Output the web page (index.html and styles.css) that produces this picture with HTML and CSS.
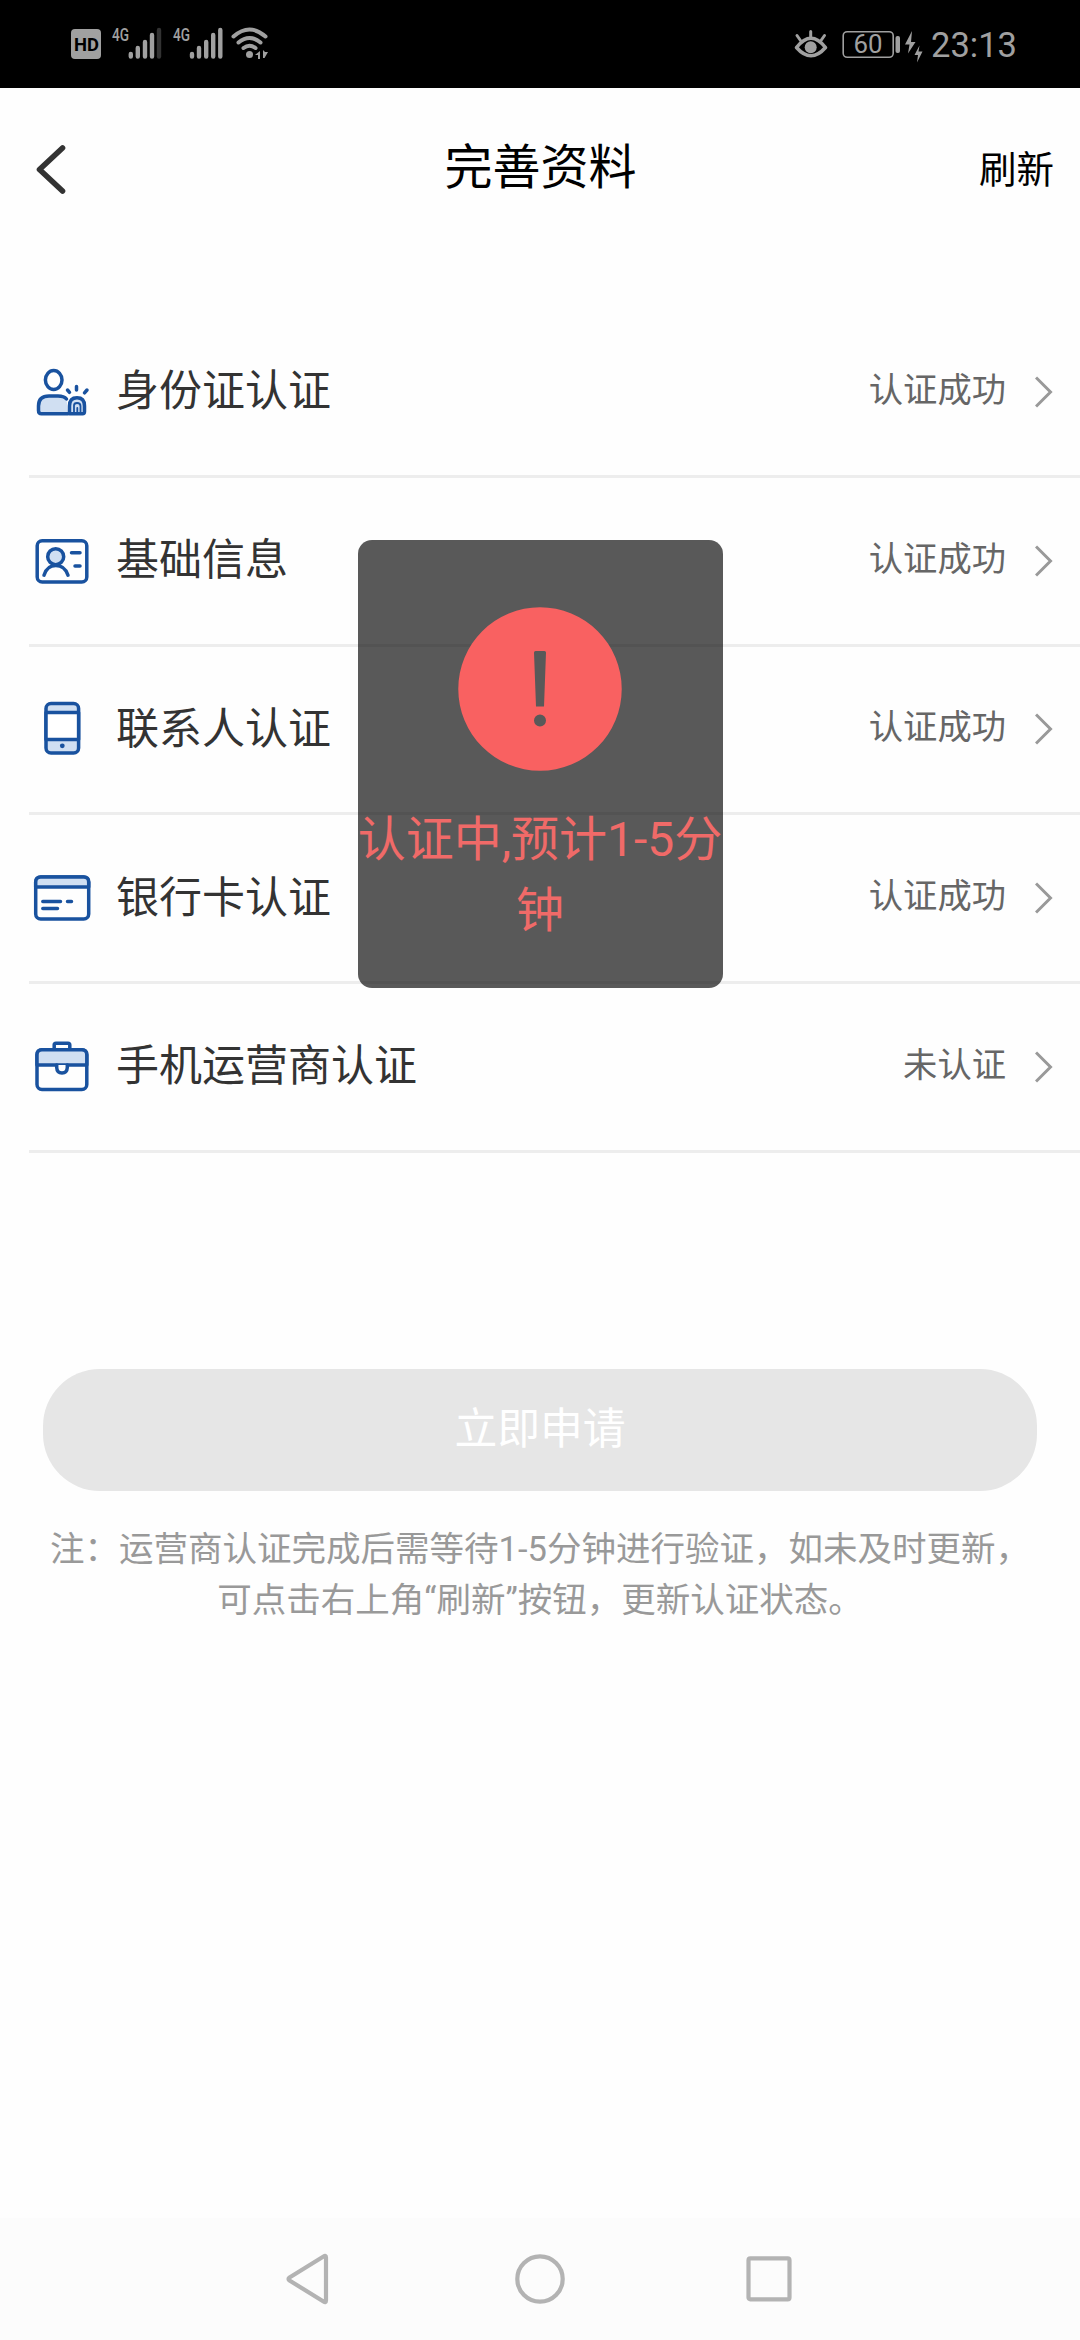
FILE: index.html
```html
<!DOCTYPE html>
<html lang="zh-CN">
<head>
<meta charset="utf-8">
<title>完善资料</title>
<link rel="stylesheet" href="styles.css">
</head>
<body>
<div class="screen">
  <div class="statusbar">
    <svg class="status-left" width="204" height="40" viewBox="0 0 204 40" fill="#a0a0a0">
      <rect x="0" y="6" width="30" height="30" rx="4"/>
      <text x="3" y="27.5" font-size="18" font-weight="700" fill="#000" textLength="25" lengthAdjust="spacingAndGlyphs">HD</text>
      <text x="41" y="18" font-size="18" font-weight="500" textLength="17" lengthAdjust="spacingAndGlyphs">4G</text>
      <g stroke="#a0a0a0" stroke-width="4.4" stroke-linecap="round">
        <path d="M59.8 31v2.5M66.8 25v8.500M74 19v14.500M81 12v21.500"/>
        <path d="M88 7v26.500" stroke="#333"/>
        <path d="M121 31v2.500M128 25v8.500M135.200 19v14.500M142.200 12v21.500M149.300 7v26.500"/>
      </g>
      <text x="102" y="18" font-size="18" font-weight="500" textLength="17" lengthAdjust="spacingAndGlyphs">4G</text>
      <g fill="none" stroke="#a0a0a0" stroke-width="4" stroke-linecap="round">
        <path d="M162.500 13.500Q178.500-.5 194.500 13.500M167.500 19.500Q178.500 10.500 189.500 19.500M172.500 25Q178.500 20.500 184.500 25"/>
      </g>
      <circle cx="178.500" cy="31.500" r="3.500"/>
      <path d="M189 28v8h-2v-4h-3zM192 27v8h1.500l3.500-6h-3z"/>
    </svg>
    <svg class="status-right" width="134" height="40" viewBox="0 0 134 40" fill="#a0a0a0">
      <path d="M2.500 22.500Q17 4 31.500 22.500Q17 39 2.500 22.500z" fill="none" stroke="#a0a0a0" stroke-width="3.600" stroke-linejoin="round"/>
      <circle cx="16.700" cy="22.300" r="6"/>
      <path d="M16.700 12V6.500M6.500 15.500L3 10.500M27 15.500L30.500 10.500" fill="none" stroke="#a0a0a0" stroke-width="3" stroke-linecap="round"/>
      <rect x="49.200" y="6.700" width="50" height="25.600" rx="4" fill="none" stroke="#a0a0a0" stroke-width="1.600"/>
      <rect x="101.500" y="11" width="4.500" height="17" rx="2"/>
      <text x="59.500" y="28" font-size="25.500" textLength="29" lengthAdjust="spacingAndGlyphs">60</text>
      <path d="M118 6l-7 13.500h4.500l-1.500 9L121.500 17h-4.500zM125.500 20.500l-5 9.500h3.500l-1 7.500 5.500-11h-4z"/>
    </svg>
    <span class="clock">23:13</span>
  </div>

  <header class="header">
    <svg class="back" width="30" height="52" viewBox="0 0 30 52"><path d="M26.500 4L3.500 25.500L26.500 47" fill="none" stroke="#333" stroke-width="5.600" stroke-linecap="round" stroke-linejoin="round"/></svg>
    <h1 class="title">完善资料</h1>
    <span class="refresh">刷新</span>
  </header>

  <main class="list">
    <div class="row">
      <svg class="icon" viewBox="0 0 58 58">
        <ellipse cx="20.700" cy="17" rx="8.300" ry="9.500" fill="#fff"/>
        <path class="tint" d="M35 50.800H8.500Q5.500 50.800 5.500 47.500V43Q5.500 33 16 33H25Q31 33 33.500 36"/>
        <path class="tint" d="M36.500 50.800V43Q36.500 34.800 44 34.800Q51.500 34.800 51.500 43V48.500Q51.500 50.800 49.500 50.800z"/>
        <path class="thin" d="M41 50V42.500Q41 40 44 40Q47.500 40 47.500 43V49.500M44.300 45V50"/>
        <path d="M43.500 23.500V27M34.500 27L36.500 29.300M54 27L51.500 29.800"/>
      </svg>
      <span class="name">身份证认证</span><span class="state">认证成功</span>
      <svg class="chevron" viewBox="0 0 18 32"><path d="M1 1.500L15.500 16L1 30.500"/></svg>
    </div>
    <div class="row">
      <svg class="icon" viewBox="0 0 58 58">
        <rect x="4.200" y="8.700" width="49.600" height="41.200" rx="5"/>
        <circle class="tint" cx="22.700" cy="24.700" r="8"/>
        <path d="M11 43.200Q14 33.500 22.800 33.500Q31.800 33.500 35 43.200M38.500 20.800H47M42 34H47"/>
      </svg>
      <span class="name">基础信息</span><span class="state">认证成功</span>
      <svg class="chevron" viewBox="0 0 18 32"><path d="M1 1.500L15.500 16L1 30.500"/></svg>
    </div>
    <div class="row">
      <svg class="icon" viewBox="0 0 58 58">
        <rect class="tint" x="13" y="3.500" width="32.600" height="49.600" rx="5"/>
        <rect x="13" y="12.400" width="32.600" height="27" fill="#fff"/>
        <circle class="dot" cx="29.300" cy="45.800" r="2.400"/>
      </svg>
      <span class="name">联系人认证</span><span class="state">认证成功</span>
      <svg class="chevron" viewBox="0 0 18 32"><path d="M1 1.500L15.500 16L1 30.500"/></svg>
    </div>
    <div class="row">
      <svg class="icon" viewBox="0 0 58 58">
        <rect x="2.700" y="8" width="53" height="42" rx="5"/>
        <path class="tint" d="M2.700 18V13Q2.700 8 7.700 8H50.700Q55.700 8 55.700 13V18z"/>
        <path d="M9.800 32.400H27.500M34.500 32.400H38.500M9.800 39.600H24.500"/>
      </svg>
      <span class="name">银行卡认证</span><span class="state">认证成功</span>
      <svg class="chevron" viewBox="0 0 18 32"><path d="M1 1.500L15.500 16L1 30.500"/></svg>
    </div>
    <div class="row">
      <svg class="icon" viewBox="0 0 58 58">
        <path d="M21.200 11.500V7Q21.200 5.200 23 5.200H35Q36.800 5.200 36.800 7V11.500"/>
        <rect x="4" y="11.800" width="49.800" height="39.700" rx="5"/>
        <path class="tint" d="M4 27V16.800Q4 11.800 9 11.800H48.800Q53.800 11.800 53.800 16.800V27z"/>
        <path d="M23.700 27V29.500Q24 35 29 35Q34 35 34.300 29.500V27" fill="#fff"/>
      </svg>
      <span class="name">手机运营商认证</span><span class="state">未认证</span>
      <svg class="chevron" viewBox="0 0 18 32"><path d="M1 1.500L15.500 16L1 30.500"/></svg>
    </div>
  </main>

  <button class="apply" disabled>立即申请</button>
  <p class="note">注：运营商认证完成后需等待1-5分钟进行验证，如未及时更新，<br>可点击右上角“刷新”按钮，更新认证状态。</p>

  <nav class="navbar">
    <svg width="50" height="54" viewBox="0 0 50 54"><path d="M4.500 25.500Q2.500 27 4.500 28.500L38.500 49.500Q41 51 41 48.500V5.500Q41 3 38.500 4.500z"/></svg>
    <svg width="54" height="54" viewBox="0 0 54 54"><circle cx="27" cy="27" r="22.700"/></svg>
    <svg width="50" height="54" viewBox="0 0 50 54"><rect x="4.500" y="6.400" width="41" height="41" rx="1.800"/></svg>
  </nav>

  <div class="toast">
    <svg class="alert" viewBox="0 0 164 164">
      <path fill="#f96161" fill-rule="evenodd" d="M82 .3a81.700 81.700 0 1 1 0 163.400a81.700 81.700 0 1 1 0-163.400zM77.500 44Q76 44 76 45.500L78 99.500H86L88 45.500Q88 44 86.500 44zM82 107.500a6 6 0 1 0 0 12a6 6 0 1 0 0-12z"/>
    </svg>
    <p class="toast-text">认证中,预计1-5分<br>钟</p>
  </div>
</div>
</body>
</html>
```
FILE: styles.css
```css
* { box-sizing: border-box; }
body {
  margin: 0;
  background: #fff;
  font-family: Roboto, "Noto Sans CJK SC", sans-serif;
}
.screen {
  position: relative;
  width: 1080px;
  height: 2340px;
  overflow: hidden;
  display: flex;
  flex-direction: column;
  background: #fefefe;
}
.statusbar {
  height: 88px;
  flex: none;
  display: flex;
  align-items: center;
  padding: 2px 64px 0 71px;
  background: #000;
  color: #a0a0a0;
}
.status-left { margin-top: -4px; }
.status-right { margin-left: auto; margin-right: 3px; }
.clock { font-size: 34.5px; line-height: 40px; width: 85px; white-space: nowrap; }
.header {
  height: 162px;
  flex: none;
  display: grid;
  grid-template-columns: 1fr auto 1fr;
  align-items: center;
  padding: 2px 26px 0 27px;
  margin-bottom: 59px;
  color: #000;
}
.back { margin-left: 9px; }
.title { margin: 0; padding-bottom: 4px; font-size: 48px; font-weight: 400; line-height: 70px; }
.refresh { justify-self: end; font-size: 37.5px; line-height: 54px; }
.list { flex: none; margin-left: 29px; }
.row {
  height: 168.75px;
  display: flex;
  align-items: center;
  padding: 0 27px 0 4px;
  border-bottom: 3px solid #ededed;
}
.icon {
  width: 58px;
  height: 58px;
  fill: none;
  stroke: #19529f;
  stroke-width: 3.5;
  stroke-linecap: round;
  stroke-linejoin: round;
}
.tint { fill: #d0dff2; }
.thin { stroke-width: 1.8; }
.dot { fill: #19529f; stroke: none; }
.name { margin-left: 25px; padding-bottom: 1px; font-size: 43px; line-height: 62px; color: #333; }
.state { margin-left: auto; padding-bottom: 4px; font-size: 34.3px; line-height: 50px; color: #666; }
.chevron {
  width: 18px;
  height: 32px;
  margin-left: 29px;
  fill: none;
  stroke: #999;
  stroke-width: 3;
}
.apply {
  flex: none;
  height: 122px;
  margin: 216px 43px 0;
  padding: 0 0 9px;
  border: 0;
  border-radius: 57px;
  background: #e6e6e6;
  color: #fff;
  font: inherit;
  font-size: 42.8px;
}
.note {
  margin: 33px 0 0;
  font-size: 34.5px;
  line-height: 51px;
  text-align: center;
  white-space: nowrap;
  color: #999;
}
.navbar {
  flex: none;
  height: 122px;
  margin-top: auto;
  padding: 0 286px 0 285px;
  display: flex;
  align-items: center;
  justify-content: space-between;
  background: #fcfcfc;
}
.navbar svg { fill: none; stroke: #b3b3b3; stroke-width: 4.2; stroke-linejoin: round; }
.toast {
  position: absolute;
  left: 357.5px;
  top: 540px;
  width: 365px;
  height: 448px;
  padding-top: 66.500px;
  border-radius: 14px;
  background: rgba(0, 0, 0, .65);
  display: flex;
  flex-direction: column;
  align-items: center;
}
.alert { width: 164px; height: 164px; flex: none; }
.toast-text {
  margin: 33px 0 0;
  font-size: 48px;
  line-height: 71px;
  text-align: center;
  white-space: nowrap;
  color: #f06a68;
}
```
